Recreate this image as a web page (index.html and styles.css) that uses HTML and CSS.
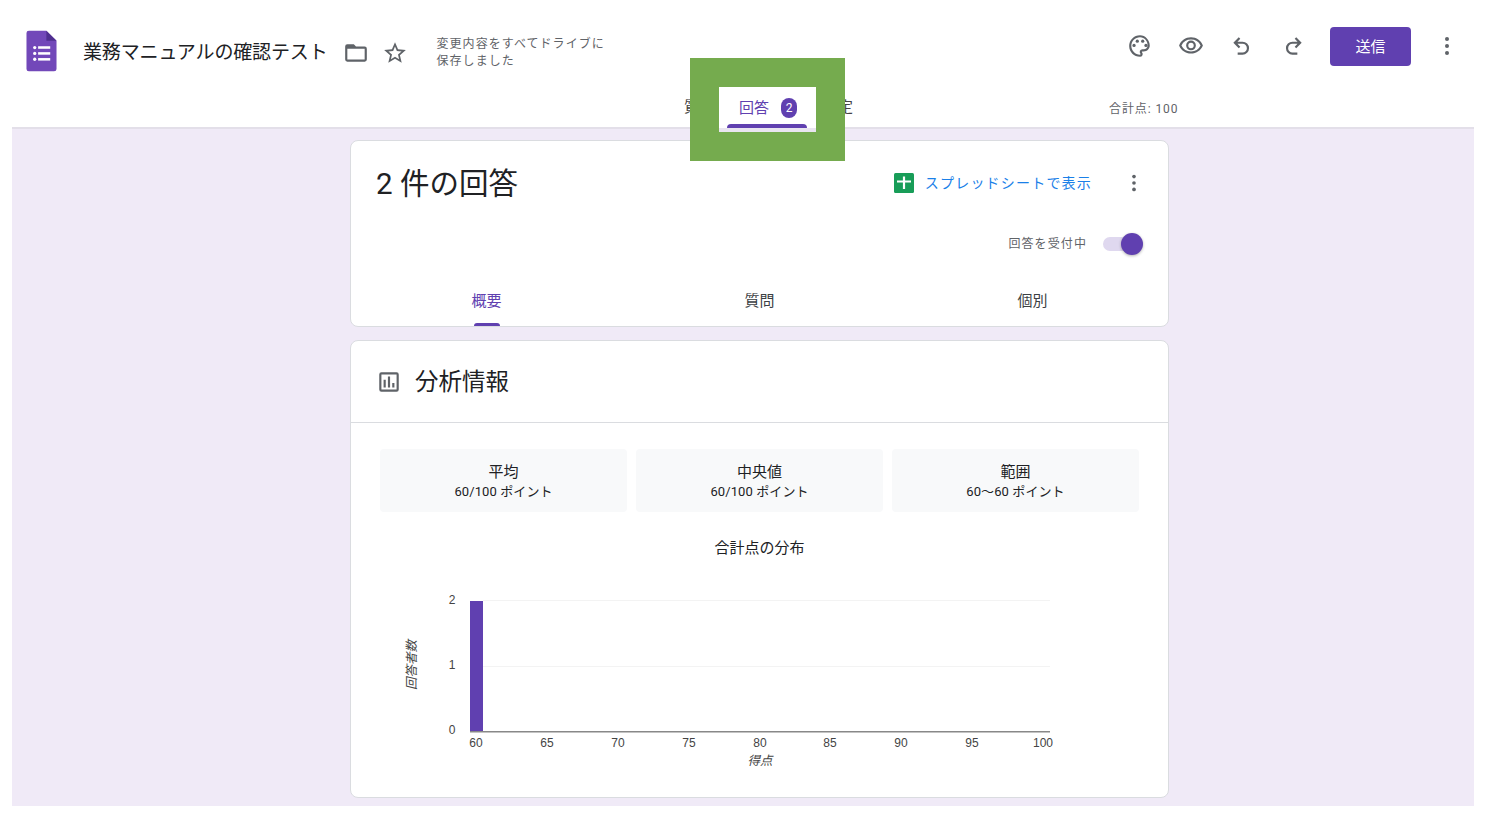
FILE: index.html
```html
<!DOCTYPE html>
<html lang="ja">
<head>
<meta charset="utf-8">
<title>業務マニュアルの確認テスト</title>
<link rel="stylesheet" href="styles.css">
</head>
<body>
<div class="app">
  <header class="topbar">
    <svg class="logo" viewBox="0 0 32 43" width="31" height="42">
      <path d="M3 .5H21L31.5 11V40a2.5 2.5 0 0 1-2.5 2.5H3A2.5 2.5 0 0 1 .5 40V3A2.5 2.5 0 0 1 3 .5Z" fill="#7248b9"/>
      <path d="M21 .5 31.5 11H21Z" fill="#4f2f8f"/>
      <g fill="#fff"><circle cx="9" cy="18" r="1.7"/><circle cx="9" cy="24" r="1.7"/><circle cx="9" cy="30" r="1.7"/><rect x="12.5" y="16.6" width="12.5" height="2.6"/><rect x="12.5" y="22.7" width="12.5" height="2.6"/><rect x="12.5" y="28.8" width="12.5" height="2.6"/></g>
    </svg>
    <h1 class="doc-title">業務マニュアルの確認テスト</h1>
    <svg class="icon folder" viewBox="0 0 24 24" width="26" height="26"><path d="M20 6h-8l-2-2H4a2 2 0 0 0-2 2v12a2 2 0 0 0 2 2h16a2 2 0 0 0 2-2V8a2 2 0 0 0-2-2Zm0 12H4V8h16v10Z"/></svg>
    <svg class="icon star" viewBox="0 0 24 24" width="26" height="26"><path d="M22 9.24l-7.19-.62L12 2 9.19 8.63 2 9.24l5.46 4.73L5.82 21 12 17.27 18.18 21l-1.63-7.03L22 9.24ZM12 15.4l-3.76 2.27 1-4.28-3.32-2.88 4.38-.38L12 6.1l1.71 4.04 4.38.38-3.32 2.88 1 4.28L12 15.4Z"/></svg>
    <p class="save-status">変更内容をすべてドライブに<br>保存しました</p>
    <div class="actions">
      <svg class="icon" viewBox="0 0 24 24" width="26" height="26"><path d="M12 2C6.49 2 2 6.49 2 12s4.49 10 10 10a2.5 2.5 0 0 0 1.85-4.18.5.5 0 0 1 .37-.82h1.28c3.03 0 5.5-2.47 5.5-5.5C21 6.58 16.97 2 12 2Zm3.5 13h-1.28a2.5 2.5 0 0 0-1.86 4.17.5.5 0 0 1-.36.83c-4.41 0-8-3.59-8-8s3.59-8 8-8 7 3.6 7 7.5c0 1.93-1.57 3.5-3.5 3.5Z"/><circle cx="6.5" cy="11.5" r="1.5"/><circle cx="9.5" cy="7.5" r="1.5"/><circle cx="14.5" cy="7.5" r="1.5"/><circle cx="17.5" cy="11.5" r="1.5"/></svg>
      <svg class="icon" viewBox="0 0 24 24" width="26" height="26"><path d="M12 6a9.77 9.77 0 0 1 8.82 5.5A9.77 9.77 0 0 1 12 17a9.77 9.77 0 0 1-8.82-5.5A9.77 9.77 0 0 1 12 6Zm0-2C7 4 2.73 7.11 1 11.5 2.73 15.89 7 19 12 19s9.27-3.11 11-7.5C21.27 7.11 17 4 12 4Zm0 5a2.5 2.5 0 1 1 0 5 2.5 2.5 0 0 1 0-5Zm0-2a4.5 4.5 0 1 0 0 9 4.5 4.5 0 0 0 0-9Z"/></svg>
      <svg class="icon" viewBox="0 0 24 24" width="26" height="26"><path d="M12.5 8H7.83l2.58-2.59L9 4 4 9l5 5 1.41-1.41L7.83 10h4.67a4 4 0 0 1 0 8H8v2h4.5a6 6 0 0 0 0-12Z"/></svg>
      <svg class="icon" viewBox="0 0 24 24" width="26" height="26"><path d="M11.5 8h4.67l-2.58-2.59L15 4l5 5-5 5-1.41-1.41L16.17 10H11.5a4 4 0 0 0 0 8H16v2h-4.5a6 6 0 0 1 0-12Z"/></svg>
      <button class="send">送信</button>
      <svg class="icon more" viewBox="0 0 24 24" width="24" height="24"><circle cx="12" cy="5" r="2"/><circle cx="12" cy="12" r="2"/><circle cx="12" cy="19" r="2"/></svg>
    </div>
  </header>
  <nav class="main-tabs">
    <span class="main-tab">質問</span>
    <span class="tab-spacer"></span>
    <span class="main-tab">設定</span>
    <span class="total">合計点: 100</span>
  </nav>
  <main class="content">
    <section class="card summary">
      <div class="summary-head">
        <h2 class="count">2 件の回答</h2>
        <div class="sheet-link">
          <svg viewBox="0 0 20 20" width="20" height="20"><rect width="20" height="20" rx="1.5" fill="#189d58"/><path d="M3 7.4h5.9V3.4h2.2v4H17v2.2h-5.9V16H8.9V9.6H3Z" fill="#fff"/></svg>
          <span class="sheet-label">スプレッドシートで表示</span>
        </div>
        <svg class="icon card-more" viewBox="0 0 24 24" width="22" height="22"><circle cx="12" cy="5" r="2"/><circle cx="12" cy="12" r="2"/><circle cx="12" cy="19" r="2"/></svg>
      </div>
      <div class="accepting">
        <span class="accepting-label">回答を受付中</span>
        <span class="switch"><span class="knob"></span></span>
      </div>
      <div class="sub-tabs">
        <span class="sub-tab active">概要</span>
        <span class="sub-tab">質問</span>
        <span class="sub-tab">個別</span>
      </div>
    </section>
    <section class="card insights">
      <div class="insights-head">
        <svg class="icon" viewBox="0 0 24 24" width="26" height="26"><path d="M19 3H5a2 2 0 0 0-2 2v14a2 2 0 0 0 2 2h14a2 2 0 0 0 2-2V5a2 2 0 0 0-2-2Zm0 16H5V5h14v14ZM7 10h2v7H7v-7Zm4-3h2v10h-2V7Zm4 6h2v4h-2v-4Z"/></svg>
        <h2>分析情報</h2>
      </div>
      <div class="stats">
        <div class="stat"><strong>平均</strong><span>60/100 ポイント</span></div>
        <div class="stat"><strong>中央値</strong><span>60/100 ポイント</span></div>
        <div class="stat"><strong>範囲</strong><span>60～60 ポイント</span></div>
      </div>
      <h3 class="chart-title">合計点の分布</h3>
      <svg class="chart" viewBox="0 0 817 200" width="817" height="200">
        <rect class="gridline" x="132" y="22" width="567" height="1"/>
        <rect class="gridline" x="132" y="88" width="567" height="1"/>
        <rect class="bar" x="119" y="23" width="13" height="130"/>
        <rect class="axis" x="119" y="153" width="580" height="1.5"/>
        <text class="y-tick" x="101" y="26">2</text>
        <text class="y-tick" x="101" y="91">1</text>
        <text class="y-tick" x="101" y="156">0</text>
        <text class="x-tick" x="125" y="169">60</text>
        <text class="x-tick" x="196" y="169">65</text>
        <text class="x-tick" x="267" y="169">70</text>
        <text class="x-tick" x="338" y="169">75</text>
        <text class="x-tick" x="409" y="169">80</text>
        <text class="x-tick" x="479" y="169">85</text>
        <text class="x-tick" x="550" y="169">90</text>
        <text class="x-tick" x="621" y="169">95</text>
        <text class="x-tick" x="692" y="169">100</text>
        <text class="axis-title" x="409" y="187">得点</text>
        <text class="axis-title" x="0" y="0" transform="translate(65 87) rotate(-90)">回答者数</text>
      </svg>
    </section>
  </main>
  <div class="highlight">
    <div class="highlight-hole">
      <div class="hole-tab"><span>回答</span><span class="badge">2</span></div>
      <div class="hole-underline"></div>
      <div class="hole-floor"></div>
    </div>
  </div>
</div>
</body>
</html>
```
FILE: styles.css
```css
* { box-sizing: border-box; }
html, body { margin: 0; height: 100%; background: #fff; overflow: hidden; }
body { font-family: Roboto, "Noto Sans CJK JP", sans-serif; color: #202124; }
.app { position: relative; margin: 0 12px; height: 806px; display: flex; flex-direction: column; overflow: hidden; }
.icon { fill: #5f6368; flex: none; }

.topbar { height: 93px; display: flex; align-items: center; padding: 9px 15px 0 14px; }
.logo { flex: none; }
.doc-title { margin: 0 0 2px 26px; font-size: 19px; font-weight: 400; letter-spacing: -.15px; white-space: nowrap; }
.folder { margin: 3px 0 0 16px; }
.star { margin: 3px 0 0 13px; }
.save-status { margin: 4px 0 0 28px; font-size: 12px; line-height: 17px; color: #5f6368; letter-spacing: 1.05px; white-space: nowrap; }
.actions { margin: 0 0 10px auto; display: flex; align-items: center; gap: 25px; }
.send { width: 81px; height: 39px; margin-left: -1px; padding: 0 0 2px; border: 0; border-radius: 4px; background: #6040b0; color: #fff; font: 15px Roboto, "Noto Sans CJK JP", sans-serif; }
.more { margin-left: -1px; }

.main-tabs { height: 34px; display: flex; gap: 25px; font-size: 15px; line-height: 20px; color: #444; padding: 4px 0 0 672px; }
.tab-spacer { width: 59px; }
.total { margin-left: 231px; font-size: 12px; letter-spacing: .9px; color: #5f6368; padding-top: 2px; }

.content { flex: 1; background: #f0eaf7; border-top: 2px solid #e3dfe9; padding: 11px 0 0 338px; display: flex; flex-direction: column; align-items: flex-start; gap: 13px; }
.card { width: 819px; flex: none; background: #fff; border: 1px solid #dadce0; border-radius: 8px; }

.summary { height: 187px; display: flex; flex-direction: column; overflow: hidden; }
.summary-head { display: flex; align-items: center; height: 42px; margin-top: 21px; padding: 0 23px 0 25px; }
.count { margin: 2px 0 0; font-size: 29.5px; font-weight: 400; line-height: 42px; }
.sheet-link { margin-left: auto; display: flex; align-items: center; gap: 11px; color: #1a80e8; font-size: 14px; letter-spacing: 1.2px; }
.sheet-label { margin-bottom: 2px; }
.card-more { margin-left: 31px; }
.accepting { display: flex; justify-content: flex-end; align-items: center; gap: 16px; padding-right: 28px; margin-top: 28px; height: 24px; font-size: 12px; color: #5f6368; letter-spacing: 1.1px; }
.accepting-label { margin-bottom: 3px; }
.switch { position: relative; width: 36px; height: 14px; border-radius: 7px; background: #dfd8ef; margin-right: 1px; }
.knob { position: absolute; right: -4px; top: -4px; width: 22px; height: 22px; border-radius: 50%; background: #6040b0; box-shadow: 0 1px 3px rgba(0,0,0,.3); }
.sub-tabs { margin: auto 0 0 -1px; height: 50px; display: grid; grid-template-columns: repeat(3, 273px); font-size: 15px; color: #3c4043; text-align: center; padding-top: 13px; }
.sub-tab { position: relative; }
.sub-tab.active { color: #6040b0; }
.sub-tab.active::after { content: ""; position: absolute; left: 50%; bottom: 0; margin-left: -13px; width: 26px; height: 3px; border-radius: 3px 3px 0 0; background: #6040b0; }

.insights { height: 458px; }
.insights-head { height: 82px; display: flex; align-items: center; gap: 13px; padding-left: 25px; border-bottom: 1px solid #dadce0; }
.insights-head h2 { margin: 0 0 3px; font-size: 23.5px; font-weight: 400; }
.stats { display: grid; grid-template-columns: repeat(3, 247px); gap: 9px; margin: 26px 0 0 29px; }
.stat { height: 63px; padding-top: 2px; border-radius: 4px; background: #f8f9fa; display: flex; flex-direction: column; align-items: center; justify-content: center; font-size: 15px; line-height: 20px; }
.stat strong { font-weight: 400; }
.stat span { font-size: 13px; letter-spacing: .1px; }
.chart-title { margin: 26px 0 0; font-size: 15px; line-height: 20px; font-weight: 400; text-align: center; }
.chart { display: block; margin-top: 20px; font-family: "Liberation Sans", "Noto Sans CJK JP", sans-serif; }
.gridline { fill: #f3f3f3; }
.bar { fill: #6040b0; }
.axis { fill: #888; }
.y-tick, .x-tick { font-size: 12px; fill: #444; text-anchor: middle; }
.axis-title { font-size: 12.5px; font-style: italic; fill: #444; text-anchor: middle; }

.highlight { position: absolute; left: 678px; top: 58px; width: 155px; height: 103px; background: #75ab4e; padding: 29px; }
.highlight-hole { background: #fff; height: 45px; display: flex; flex-direction: column; }
.hole-tab { height: 37px; padding: 11px 0 0 20px; display: flex; gap: 12px; font-size: 15px; line-height: 20px; color: #6040b0; }
.badge { width: 16px; height: 20px; border-radius: 8px; background: #6040b0; color: #fff; font-size: 12px; display: flex; align-items: center; justify-content: center; }
.hole-underline { height: 4px; margin: 0 9px 0 8px; border-radius: 4px 4px 0 0; background: #6040b0; }
.hole-floor { height: 4px; background: #e9e5f0; }
```
